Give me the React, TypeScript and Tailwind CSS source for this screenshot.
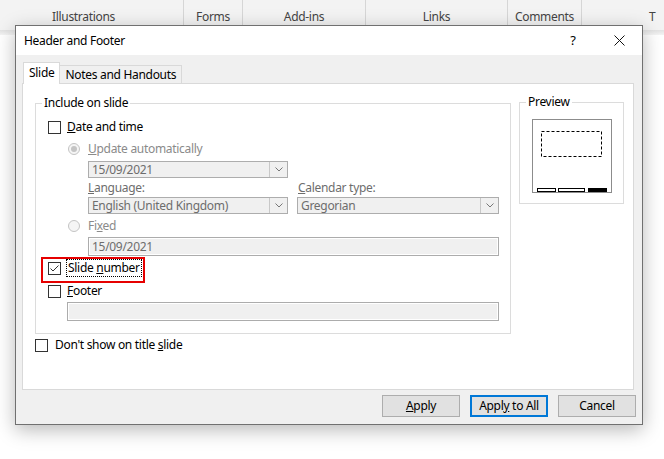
import type { ReactNode } from "react";

const ribbonGroups: Array<{ label: string; width: string; pad?: string }> = [
  { label: "Illustrations", width: "w-[183px]", pad: "pr-[16px]" },
  { label: "Forms", width: "w-[58px]" },
  { label: "Add-ins", width: "w-[122px]" },
  { label: "Links", width: "w-[141px]" },
  { label: "Comments", width: "w-[73px]" }
];

function Checkbox({ checked = false }: { checked?: boolean }) {
  return (
    <span className="flex h-[13px] w-[13px] shrink-0 items-center justify-center border border-[#333333] bg-white">
      {checked ? (
        <svg width="11" height="11" viewBox="0 0 11 11">
          <polyline points="1.5,5.5 4,8 9.5,2.5" fill="none" stroke="#333333" strokeWidth="1" />
        </svg>
      ) : null}
    </span>
  );
}

function Radio({ selected = false }: { selected?: boolean }) {
  return (
    <span className="flex h-[12px] w-[12px] shrink-0 items-center justify-center rounded-full border border-[#c4c4c4] bg-[#f5f5f5]">
      {selected ? <span className="h-[6px] w-[6px] rounded-full bg-[#c4c4c4]" /> : null}
    </span>
  );
}

function Combo({ value, className }: { value: string; className: string }) {
  return (
    <div className={`flex h-[17px] border border-[#adadad] bg-[#f0f0f0] ${className}`}>
      <div className="flex-1 pl-[3px] leading-[15px] text-[#6d6d6d]">{value}</div>
      <div className="flex w-[18px] items-center justify-center border-l border-[#c8c8c8] bg-[#f0f0f0]">
        <svg width="8" height="5" viewBox="0 0 8 5">
          <polyline points="0.5,0.5 4,4 7.5,0.5" fill="none" stroke="#777777" strokeWidth="1" />
        </svg>
      </div>
    </div>
  );
}

function TextBox({ value, className }: { value?: string; className: string }) {
  return (
    <div
      className={`h-[19px] border border-[#acacac] bg-[#f0f0f0] pl-[3px] leading-[17px] text-[#6d6d6d] shadow-[inset_0_0_0_1px_#ffffff] ${className}`}
    >
      {value}
    </div>
  );
}

function Row({ children, className = "" }: { children: ReactNode; className?: string }) {
  return <div className={`relative flex h-[16px] items-center leading-[16px] ${className}`}>{children}</div>;
}

function DialogButton({ children, primary = false }: { children: ReactNode; primary?: boolean }) {
  return (
    <button
      className={`h-[22px] w-[78px] bg-[#e1e1e1] leading-[16px] text-black ${
        primary ? "border-2 border-[#0078d7]" : "border border-[#adadad]"
      }`}
      type="button"
    >
      {children}
    </button>
  );
}

function SlidePreview() {
  return (
    <svg width="80" height="74" viewBox="0 0 80 74">
      <rect x="0.5" y="0.5" width="79" height="73" fill="#ffffff" stroke="#8c8c8c" />
      <rect x="9.5" y="12.5" width="60" height="25" fill="none" stroke="#000000" strokeDasharray="3 2" />
      <rect x="5.5" y="69.5" width="18" height="3" fill="#ffffff" stroke="#000000" />
      <rect x="26.5" y="69.5" width="26" height="3" fill="#ffffff" stroke="#000000" />
      <rect x="56" y="69" width="19" height="4" fill="#000000" />
    </svg>
  );
}

export default function App() {
  return (
    <div className="relative h-[459px] w-[664px] overflow-hidden bg-white font-['Noto_Sans',sans-serif] text-[12px] tracking-[-0.3px] text-black">
      <div className="flex h-[30px] bg-[#f3f3f3] text-[#444444]">
        {ribbonGroups.map((group) => (
          <div className="flex" key={group.label}>
            <div className={`${group.width} ${group.pad ?? ""} pt-[9px] text-center leading-[16px]`}>{group.label}</div>
            <div className="h-[25px] w-px bg-[#d6d6d6]" />
          </div>
        ))}
        <div className="flex-1 pt-[9px] pl-[67px] leading-[16px]">T</div>
      </div>
      <div className="h-[5px] bg-gradient-to-b from-[#e2e2e2] to-[#f4f4f4]" />

      <div className="absolute left-[15px] top-[25px] flex h-[400px] w-[628px] flex-col border border-[#707070] bg-[#f0f0f0] shadow-[0_5px_18px_rgba(0,0,0,0.28)]">
        <div className="flex h-[29px] items-center bg-white pl-[8px]">
          <span className="flex-1 leading-[16px]">Header and Footer</span>
          <span className="flex h-full w-[46px] items-center justify-center text-[13px]">?</span>
          <span className="flex h-full w-[46px] items-center justify-center">
            <svg width="11" height="11" viewBox="0 0 11 11">
              <path d="M0.5 0.5 L10.5 10.5 M10.5 0.5 L0.5 10.5" stroke="#111111" strokeWidth="1" />
            </svg>
          </span>
        </div>

        <div className="flex flex-1 flex-col pl-[6px] pt-[7px]">
          <div className="relative z-10 -mb-px ml-px flex h-[22px] items-end">
            <div className="h-[22px] border border-b-0 border-[#d9d9d9] bg-white px-[5px] leading-[20px]">Slide</div>
            <div className="h-[19px] border border-l-0 border-[#d9d9d9] bg-[#f0f0f0] px-[5px] leading-[17px]">
              Notes and Handouts
            </div>
          </div>

          <div className="h-[307px] w-[612px] border border-[#d9d9d9] bg-white pl-[12px] pt-[19px]">
            <div className="flex items-start">
              <div className="relative h-[231px] w-[476px] border border-[#dcdcdc] pt-[15px] pr-[11px]">
                <span className="absolute -top-[9px] left-[6px] bg-white px-[2px] leading-[16px]">Include on slide</span>

                <Row className="pl-[12px]">
                  <Checkbox />
                  <span className="ml-[6px]">
                    <u>D</u>ate and time
                  </span>
                </Row>
                <Row className="mt-[6px] pl-[32px]">
                  <Radio selected />
                  <span className="ml-[8px] text-[#8a8a8a]">
                    <u>U</u>pdate automatically
                  </span>
                </Row>
                <Combo className="ml-[52px] mt-[4px] w-[200px]" value="15/09/2021" />
                <Row className="mt-[2px] pl-[52px] text-[#6d6d6d]">
                  <span className="w-[210px]">
                    <u>L</u>anguage:
                  </span>
                  <span>
                    <u>C</u>alendar type:
                  </span>
                </Row>
                <div className="ml-[52px] mt-[1px] flex gap-[9px]">
                  <Combo className="w-[200px]" value="English (United Kingdom)" />
                  <Combo className="w-[202px]" value="Gregorian" />
                </div>
                <Row className="mt-[4px] pl-[32px]">
                  <Radio />
                  <span className="ml-[8px] text-[#8a8a8a]">
                    Fi<u>x</u>ed
                  </span>
                </Row>
                <TextBox className="ml-[52px] mt-[3px] w-[411px]" value="15/09/2021" />
                <Row className="mt-[4px] pl-[12px]">
                  <Checkbox checked />
                  <span className="ml-[5px] border border-dotted border-black px-[1px] leading-[16px]">
                    Slide <u>n</u>umber
                  </span>
                  <span className="absolute left-[5px] -top-[3px] h-[26px] w-[104px] border-2 border-[#e60000]" />
                </Row>
                <Row className="mt-[7px] pl-[12px]">
                  <Checkbox />
                  <span className="ml-[6px]">
                    <u>F</u>ooter
                  </span>
                </Row>
                <TextBox className="ml-[31px] mt-[3px] w-[432px]" />
              </div>

              <div className="relative -mt-px ml-[8px] h-[102px] w-[105px] border border-[#dcdcdc] pl-[12px] pt-[16px]">
                <span className="absolute -top-[9px] left-[6px] bg-white px-[2px] leading-[16px]">Preview</span>
                <SlidePreview />
              </div>
            </div>

            <Row className="mt-[3px]">
              <Checkbox />
              <span className="ml-[7px]">
                Don&apos;t show on title <u>s</u>lide
              </span>
            </Row>
          </div>

          <div className="mt-[5px] flex justify-end gap-[10px] pr-[6px]">
            <DialogButton>
              <u>A</u>pply
            </DialogButton>
            <DialogButton primary>
              Appl<u>y</u> to All
            </DialogButton>
            <DialogButton>Cancel</DialogButton>
          </div>
        </div>
      </div>
    </div>
  );
}
